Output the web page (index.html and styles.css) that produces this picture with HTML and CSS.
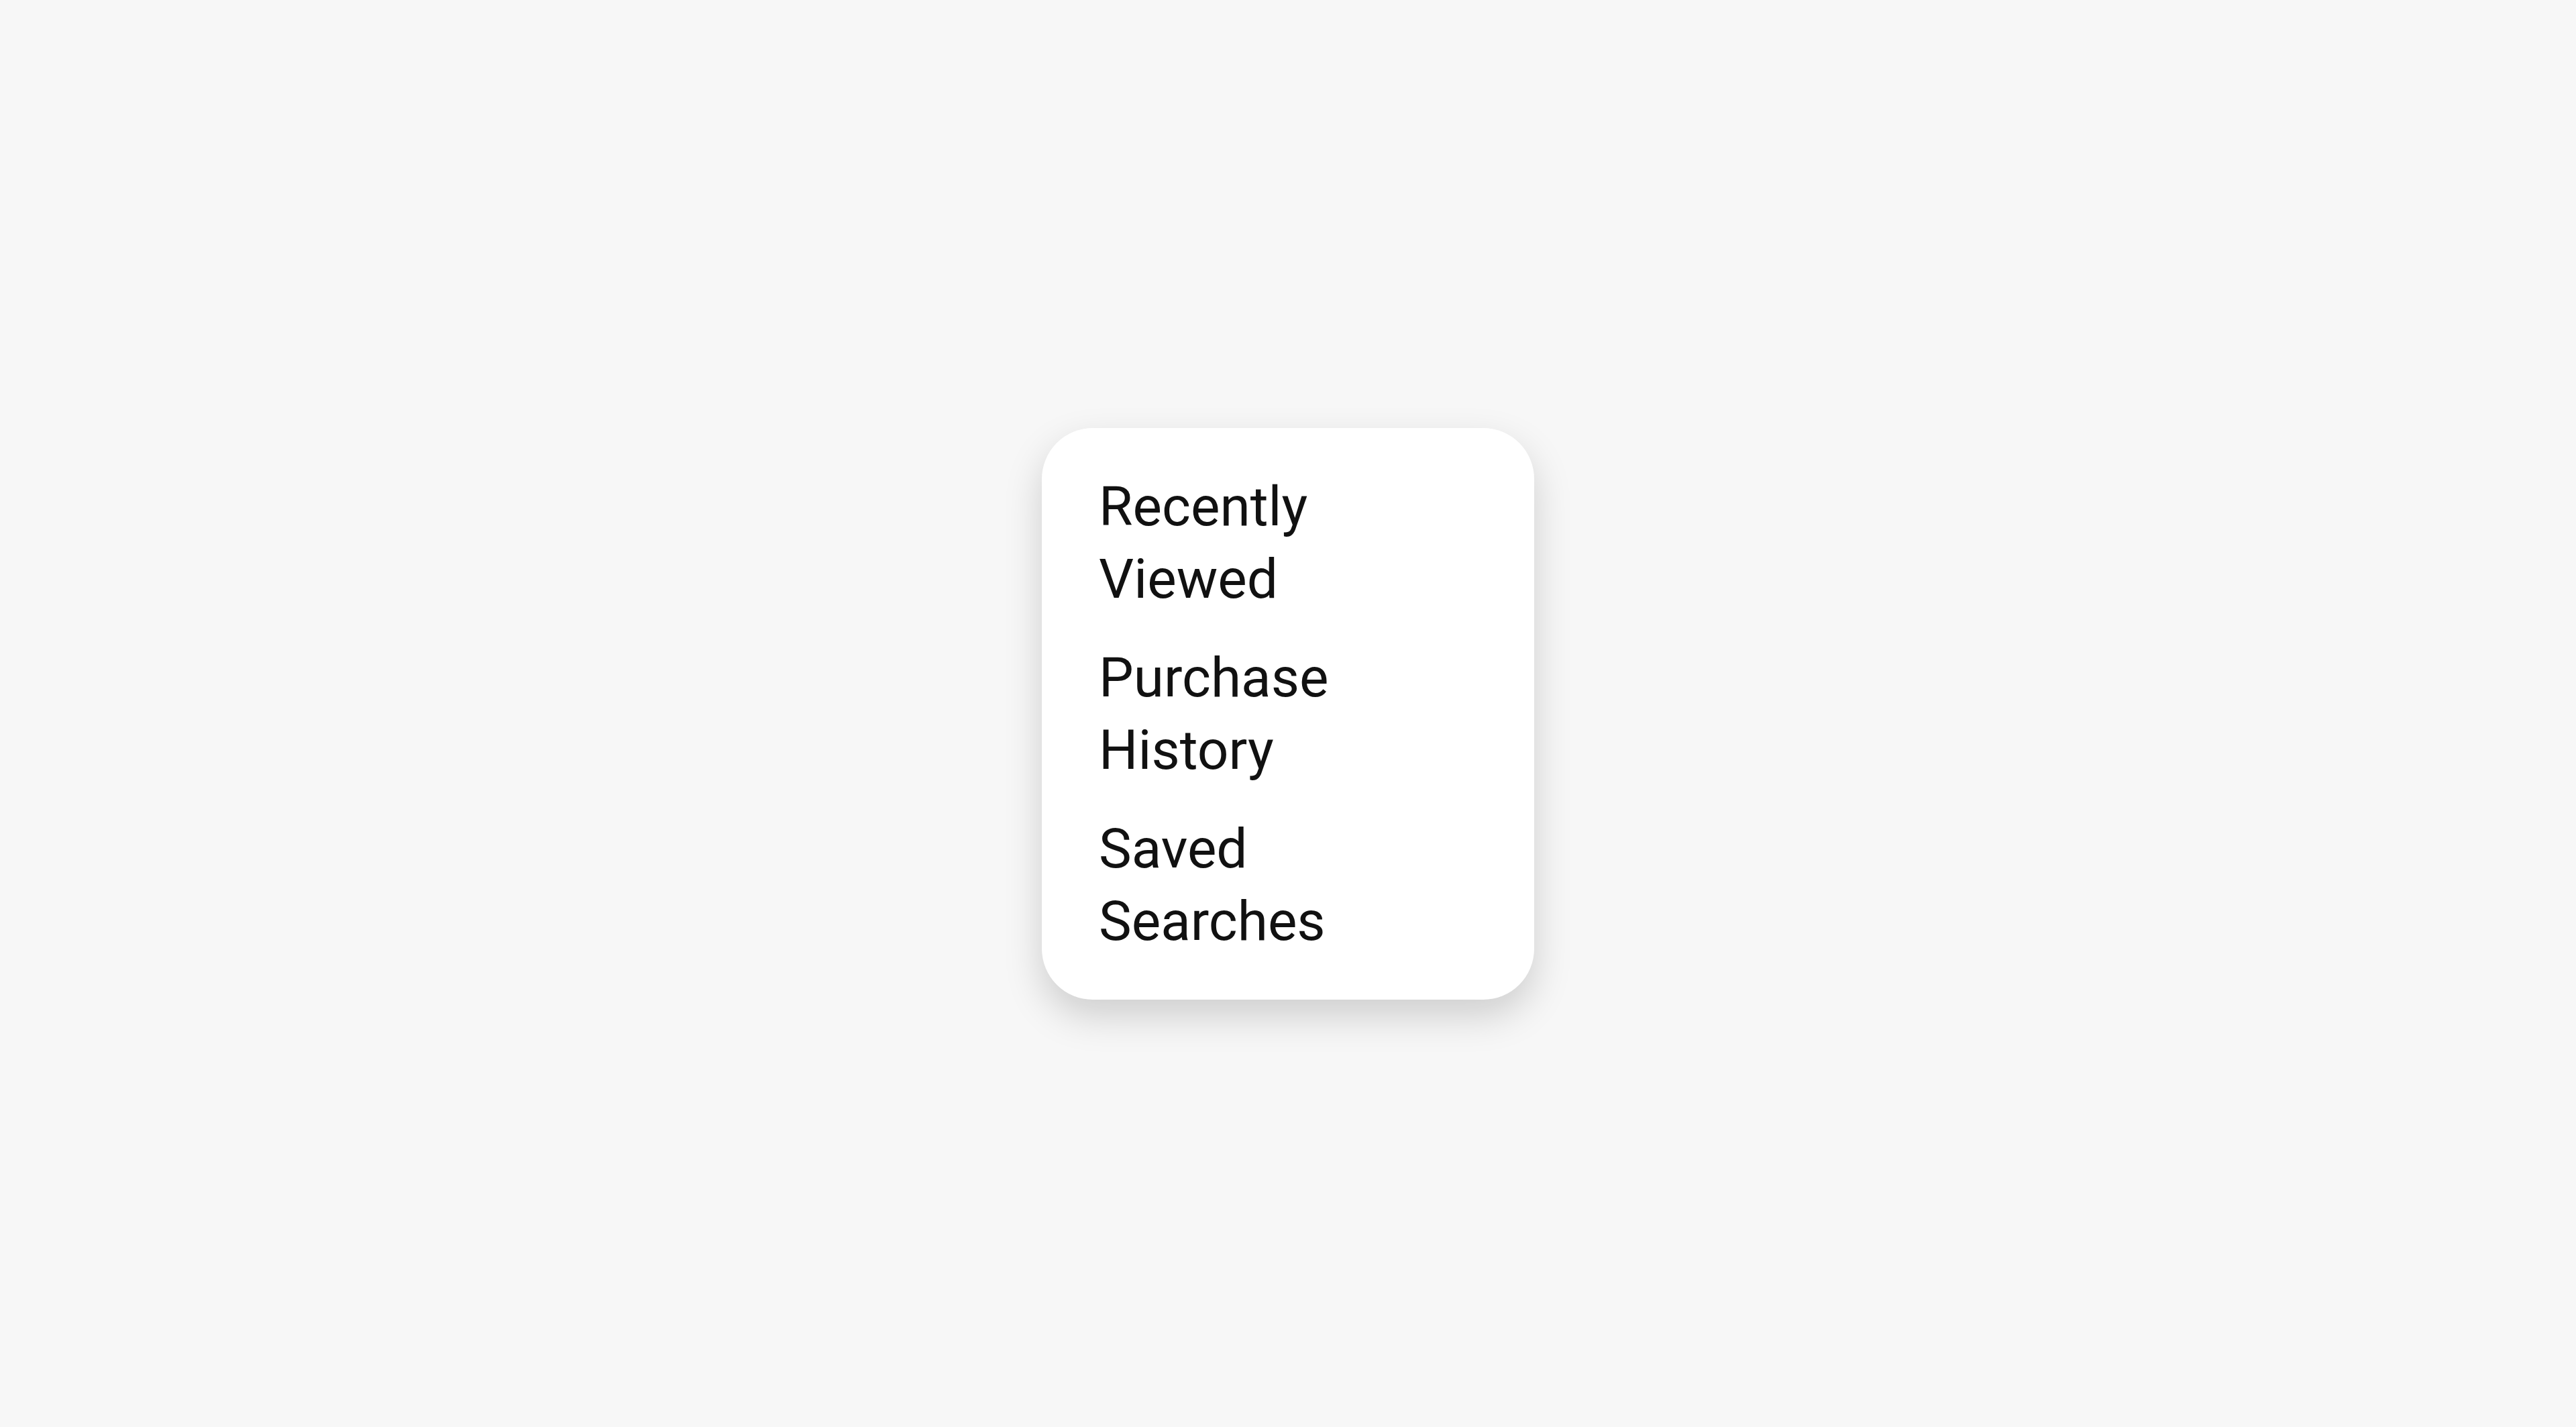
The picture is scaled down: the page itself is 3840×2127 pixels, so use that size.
FILE: index.html
```html
<!DOCTYPE html>
<html lang="en">

<head>
    <meta charset="utf-8">
    <meta name="viewport" content="width=device-width, initial-scale=1.0">
    <title>Menu</title>
    <link rel="stylesheet" href="styles.css">
</head>

<body>
    <div class="page">
        <ul class="menu">
            <li class="menu-item">Recently Viewed</li>
            <li class="menu-item">Purchase History</li>
            <li class="menu-item">Saved Searches</li>
        </ul>
    </div>
</body>

</html>
```

FILE: styles.css
```css
html,
body {
    margin: 0;
    height: 100%;
}
body {
    background: #f7f7f7;
    font-family: "Roboto", "Liberation Sans", sans-serif;
    color: #111;
}
.page {
    height: 100%;
    display: flex;
    align-items: center;
    justify-content: center;
}
.menu {
    list-style: none;
    margin: 0;
    box-sizing: border-box;
    width: 734px;
    padding: 63px 85px;
    background: #fff;
    border-radius: 76px;
    box-shadow: 0 24px 56px rgba(0, 0, 0, 0.17);
    display: flex;
    flex-direction: column;
    gap: 39px;
}
.menu-item {
    font-size: 82px;
    line-height: 108px;
    max-width: 480px;
}
```
